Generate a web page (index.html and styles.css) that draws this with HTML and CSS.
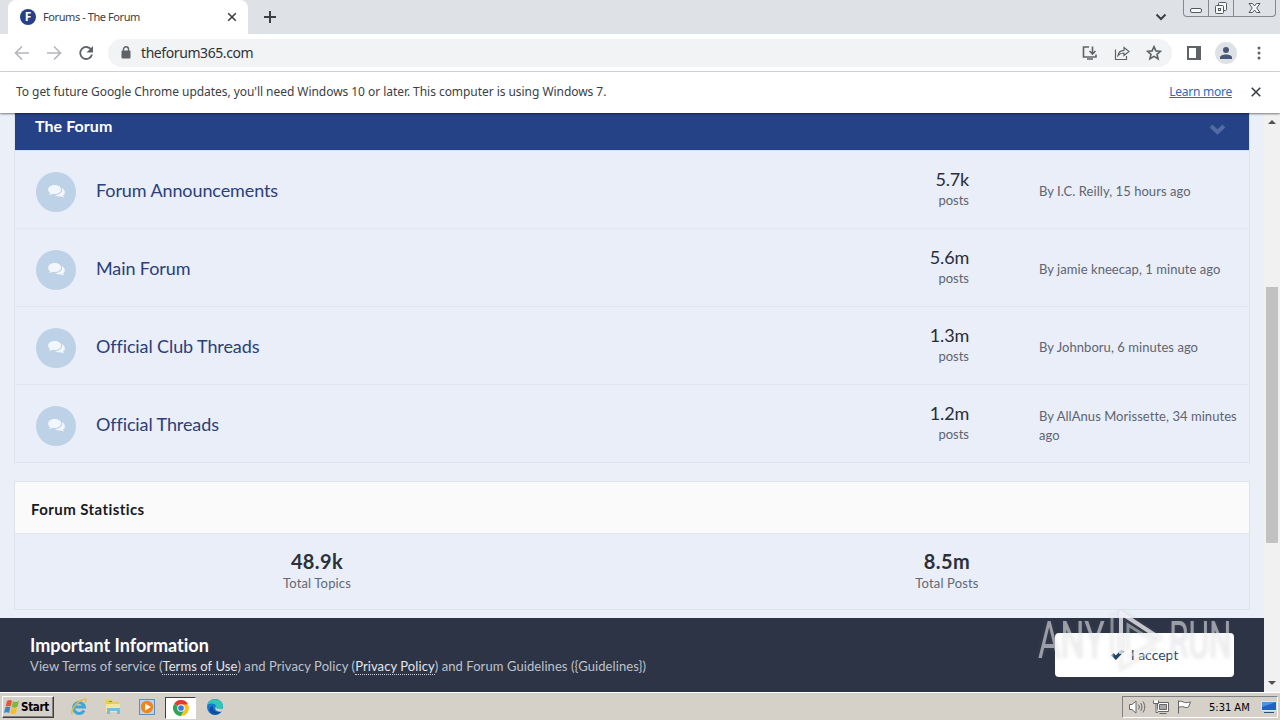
FILE: index.html
```html
<!DOCTYPE html>
<html lang="en">

<head>
    <meta charset="UTF-8">
    <title>Forums - The Forum</title>
    <link rel="stylesheet" href="styles.css">
</head>

<body>
    <svg class="defs" width="0" height="0">
        <symbol id="comments" viewBox="0 0 18 14">
            <path d="M7 0C3.200 0 0 2.200 0 5c0 1.500.9 2.800 2.300 3.700-.2.900-.8 1.500-1.300 2 1.500 0 2.800-.5 3.700-1.200.7.200 1.500.3 2.300.3 3.900 0 7-2.200 7-4.900S10.900 0 7 0z" />
            <path d="M14.900 3.300c.1.500.2 1 .2 1.500 0 3.500-3.700 6-8 6.100 1.200.9 2.700 1.400 4.500 1.400.7 0 1.300-.1 1.900-.2.900.7 2.200 1.200 3.700 1.200-.5-.5-1-1.100-1.200-1.900 1.200-.8 2-1.900 2-3.300 0-2-1.200-3.800-3.100-4.800z" />
        </symbol>
    </svg>

    <div class="tabstrip">
        <div class="tab">
            <span class="favicon">F</span>
            <span class="tab-title">Forums - The Forum</span>
            <svg class="tab-close" width="10" height="10" viewBox="0 0 10 10"><path d="M1.200 1.200l7.600 7.600M8.800 1.200L1.200 8.800" /></svg>
        </div>
        <svg class="new-tab" width="14" height="14" viewBox="0 0 14 14"><path d="M7 1v12M1 7h12" /></svg>
        <svg class="tab-search" width="12" height="8" viewBox="0 0 12 8"><path d="M1.500 1.500L6 6l4.500-4.500" /></svg>
        <div class="window-buttons">
            <span class="win-min"><svg width="13" height="16" viewBox="0 0 13 16"><rect x=".5" y="8.500" width="11" height="4" rx="1.500" /></svg></span>
            <span class="win-max"><svg width="14" height="16" viewBox="0 0 14 16"><rect x="4.500" y="2.500" width="8" height="8" rx="1" /><rect x="1.500" y="5.500" width="8" height="8" rx="1" /><rect x="4.500" y="8.500" width="2" height="2" /></svg></span>
            <span class="win-close"><svg width="13" height="16" viewBox="0 0 13 16"><path d="M1 3.500h3.500l2 2.500 2-2.500H12L8.700 8l3.300 4.500H8.500l-2-2.500-2 2.500H1L4.300 8z" /></svg></span>
        </div>
    </div>

    <div class="toolbar">
        <svg class="nav off" width="16" height="16" viewBox="0 0 16 16"><path d="M15 8H2M8 1.500L1.500 8 8 14.500" /></svg>
        <svg class="nav off" width="16" height="16" viewBox="0 0 16 16"><path d="M1 8h13M8 1.500L14.500 8 8 14.500" /></svg>
        <svg class="nav reload" width="16" height="16" viewBox="0 0 16 16"><path d="M13.300 4.800A6 6 0 1 0 14 9.500" /><path class="fill" d="M15 1v6.500H8.500z" /></svg>
        <div class="address">
            <svg class="lock" width="10" height="13" viewBox="0 0 10 13"><rect x=".5" y="4.500" width="9" height="8" rx="1" /><path d="M2.500 5V3.300a2.500 2.500 0 0 1 5 0V5" /></svg>
            <span class="url">theforum365.com</span>
            <svg class="tool" width="16" height="16" viewBox="0 0 16 16"><path d="M7 2H1.500v10H14V9.500M10.500 1.500v7M7.500 6l3 3 3-3M5 14h6" /></svg>
            <svg class="tool" width="16" height="16" viewBox="0 0 16 16"><path class="thin" d="M1.500 4.500v10h11V11M4 10.500c.5-3.500 2.500-5 6-5.200V2.500L15 6.500l-5 4V8C7.500 8 5.500 8.700 4 10.500z" /></svg>
            <svg class="tool" width="16" height="16" viewBox="0 0 16 16"><path d="M8 1.700l1.900 4.200 4.600.4-3.500 3 1.100 4.500L8 11.400l-4.100 2.400L5 9.300l-3.500-3 4.600-.4z" /></svg>
        </div>
        <svg class="panel" width="14" height="14" viewBox="0 0 14 14"><path d="M0 0h14v14H0zM2 2v10h7V2z" fill-rule="evenodd" /></svg>
        <span class="avatar"><svg width="14" height="14" viewBox="0 0 14 14"><circle cx="7" cy="4" r="3" /><path d="M1 13v-1.500C1 9.500 4 8.500 7 8.500s6 1 6 3V13z" /></svg></span>
        <svg class="dots" width="4" height="14" viewBox="0 0 4 14"><circle cx="2" cy="2" r="1.500" /><circle cx="2" cy="7" r="1.500" /><circle cx="2" cy="12" r="1.500" /></svg>
    </div>

    <div class="infobar">
        <span class="message">To get future Google Chrome updates, you'll need Windows 10 or later. This computer is using Windows 7.</span>
        <a class="learn" href="#">Learn more</a>
        <svg class="info-close" width="10" height="10" viewBox="0 0 10 10"><path d="M.7.7l8.600 8.600M9.300.7L.7 9.300" /></svg>
    </div>

    <div class="viewport">
        <div class="page">
            <main>
                <section class="forum-box">
                    <h2 class="forum-header">
                        <span>The Forum</span>
                        <svg width="17" height="11" viewBox="0 0 17 11"><path d="M2 2l6.500 6L15 2" /></svg>
                    </h2>
                    <div class="forum-row">
                        <span class="forum-icon"><svg width="17" height="13"><use href="#comments" /></svg></span>
                        <a class="forum-name">Forum Announcements</a>
                        <div class="count"><b>5.7k</b><span>posts</span></div>
                        <p class="latest">By I.C. Reilly, 15 hours ago</p>
                    </div>
                    <div class="forum-row">
                        <span class="forum-icon"><svg width="17" height="13"><use href="#comments" /></svg></span>
                        <a class="forum-name">Main Forum</a>
                        <div class="count"><b>5.6m</b><span>posts</span></div>
                        <p class="latest">By jamie kneecap, 1 minute ago</p>
                    </div>
                    <div class="forum-row">
                        <span class="forum-icon"><svg width="17" height="13"><use href="#comments" /></svg></span>
                        <a class="forum-name">Official Club Threads</a>
                        <div class="count"><b>1.3m</b><span>posts</span></div>
                        <p class="latest">By Johnboru, 6 minutes ago</p>
                    </div>
                    <div class="forum-row">
                        <span class="forum-icon"><svg width="17" height="13"><use href="#comments" /></svg></span>
                        <a class="forum-name">Official Threads</a>
                        <div class="count"><b>1.2m</b><span>posts</span></div>
                        <p class="latest">By AllAnus Morissette, 34 minutes ago</p>
                    </div>
                </section>

                <section class="stats-box">
                    <h3>Forum Statistics</h3>
                    <div class="stats">
                        <div class="stat"><b>48.9k</b><span>Total Topics</span></div>
                        <div class="stat"><b>8.5m</b><span>Total Posts</span></div>
                    </div>
                </section>
            </main>

            <div class="notice">
                <div class="notice-text">
                    <h4>Important Information</h4>
                    <p>View Terms of service (<a>Terms of Use</a>) and Privacy Policy (<a>Privacy Policy</a>) and Forum Guidelines ({Guidelines})</p>
                </div>
                <button class="accept">
                    <svg width="13" height="11" viewBox="0 0 12 10"><path d="M1.200 4.800l3.300 3.200L10.800 1.500" /></svg>
                    <span>I accept</span>
                </button>
            </div>
        </div>

        <div class="scrollbar">
            <svg width="8" height="4" viewBox="0 0 8 4"><path d="M0 4l4-4 4 4z" /></svg>
            <div class="track"><div class="thumb"></div></div>
            <svg width="8" height="4" viewBox="0 0 8 4"><path d="M0 0h8L4 4z" /></svg>
        </div>

        <div class="watermark">
            <span class="mark-any">ANY</span>
            <svg width="60" height="66" viewBox="0 0 60 66">
                <path class="soft" d="M15 8H8v42" />
                <path class="soft" d="M17 48v13l35-21" />
                <path class="strong" d="M17 46V5l40 26" />
                <path class="soft" d="M24 42V17l27 17-27 15" />
            </svg>
            <span class="mark-run">RUN</span>
        </div>
    </div>

    <div class="taskbar">
        <div class="start">
            <svg width="16" height="16" viewBox="0 0 16 16">
                <path fill="#e8562b" d="M3 2c2-1.500 3.500-1.200 5-.2L6.600 7.500C5 6.500 3.500 6.500 1.700 7.500z" />
                <path fill="#7cb83c" d="M9 2.200c2 1.200 3.700 1 6-.4l-1.500 5.900c-2 1.300-3.800 1.300-5.900.2z" />
                <path fill="#3c86c8" d="M1.400 8.300c1.800-1 3.300-1 4.900 0L5 14c-1.600-1-3.200-1-5 0z" />
                <path fill="#f4bf2d" d="M7.300 8.700c2 1.200 3.900 1 5.900-.2l-1.400 5.500c-2 1.400-3.900 1.300-5.900.1z" />
            </svg>
            <span>Start</span>
        </div>
        <div class="launch">
            <svg width="18" height="18" viewBox="0 0 18 18">
                <path d="M14 12.500A5.500 5.500 0 1 1 14.500 9H5" fill="none" stroke="#3da7dc" stroke-width="3" />
                <path d="M2.500 16C0 14 5 6 10 3s7-2 5.500 1.500" fill="none" stroke="#e4bd3d" stroke-width="1.500" />
            </svg>
            <svg width="18" height="18" viewBox="0 0 18 18">
                <path d="M2 2h6l1 2h6v10H2z" fill="#e9c85c" />
                <path d="M2 6h14v8H2z" fill="#f7e59b" />
                <path d="M3 10h13v6h-3v-3H6v3H3z" fill="#78bddc" />
                <path d="M5 3h3v1H5z" fill="#58a65c" />
            </svg>
            <svg width="18" height="18" viewBox="0 0 18 18">
                <rect x="1.500" y="1.500" width="15" height="15" fill="#b9d5ed" stroke="#5591c3" />
                <circle cx="9" cy="9" r="6.200" fill="#f08519" />
                <path d="M7 5.500l6 3.500-6 3.500z" fill="#fff" />
            </svg>
            <span class="active">
                <svg width="16" height="16" viewBox="0 0 18 18">
                    <path d="M9 9L1.200 4.500a9 9 0 0 1 15.600 0z" fill="#e33b2e" />
                    <path d="M9 9L1.200 4.500A9 9 0 0 0 9 18l4-7z" fill="#31a650" />
                    <path d="M9 5h7.900A9 9 0 0 1 9 18l4-7z" fill="#fbc116" />
                    <circle cx="9" cy="9" r="4.200" fill="#fff" />
                    <circle cx="9" cy="9" r="3.200" fill="#3b78e7" />
                </svg>
            </span>
            <svg width="18" height="18" viewBox="0 0 18 18">
                <circle cx="9" cy="9" r="8" fill="#1678d2" />
                <path d="M1.300 7C3 .5 12-1 15.800 4.500 18 8 16.500 11 13 11.500c-2 .2-3.500-.3-3-1.500C11 8 9 5.500 6 5.500 4 5.500 2 6 1.300 7z" fill="#35c6b1" />
                <path d="M7 8c-1 4 3 7 8 5.500-3 4.500-10 4-11.500-.5C2.800 11 4 8.500 7 8z" fill="#0c4fa0" />
                <path d="M9.500 8c-.5 2.500 3 3.800 6.800 2.500l1.500 1-3 2.200c-4 .3-6.500-2.200-5.300-5.700z" fill="#d5d0c8" />
            </svg>
        </div>
        <div class="tray">
            <svg width="18" height="16" viewBox="0 0 18 16"><path class="white" d="M1.500 5.500H4L8 2v12l-4-3.500H1.500z" /><path d="M10.500 5.500c1 1.500 1 3.500 0 5M12.700 4c1.700 2.500 1.700 5.500 0 8M15 2.500c2.300 3.500 2.300 7.500 0 11" /></svg>
            <svg width="18" height="16" viewBox="0 0 18 16"><path class="white" d="M5.500 3.500h11v9h-11z" /><path class="gray" d="M7.500 5.500h7v5h-7z" /><path class="white" d="M1.500 1.500v3h5v-3M4 4.500v9h2M7.500 14.500h7" /></svg>
            <svg width="18" height="16" viewBox="0 0 18 16"><path class="white" d="M2.500 1.500v13M2.500 2.500c3-1 4 .5 6 1 2 .4 3.500 0 6-.5l-2 5c-2 1-3 .5-4.500 0s-3.500-.5-5.500.5z" /></svg>
            <span class="clock">5:31 AM</span>
            <svg width="16" height="14" viewBox="0 0 16 14"><path d="M.5 1.500h15v9H.5z" fill="#2164bd" stroke="#dae4ef" /><path d="M1 2h14L1 7z" fill="#4d94df" stroke="none" /><path d="M3 12.500h10" stroke="#275085" /></svg>
        </div>
    </div>
</body>

</html>
```
FILE: styles.css
```css
* {
    box-sizing: border-box;
}

body {
    display: flex;
    flex-direction: column;
    width: 1280px;
    height: 720px;
    margin: 0;
    overflow: hidden;
    font-family: Lato, sans-serif;
    font-variant-ligatures: none;
    background: #fff;
}

svg {
    display: block;
    flex: none;
    fill: none;
}

h2, h3, h4, p {
    margin: 0;
}

.defs {
    position: absolute;
}

/* browser chrome */
.tabstrip {
    display: flex;
    height: 34px;
    flex: none;
    background: #dee1e6;
    font-family: "Noto Sans", sans-serif;
}

.tab {
    display: flex;
    align-items: center;
    width: 240px;
    margin-left: 8px;
    padding: 0 11px 0 12px;
    background: #fff;
    border-radius: 8px 8px 0 0;
}

.favicon {
    width: 16px;
    height: 16px;
    border-radius: 50%;
    background: #27408b;
    color: #fff;
    font: bold 12px/16px "Open Sans", sans-serif;
    text-align: center;
}

.tab-title {
    flex: 1;
    margin: -2px 0 0 7px;
    font-size: 11px;
    letter-spacing: -0.42px;
    color: #3c4043;
}

.tab-close,
.new-tab,
.tab-search,
.info-close {
    stroke: #3c4043;
    stroke-width: 1.6;
}

.new-tab {
    margin: 10px 0 0 15px;
    stroke-width: 2;
}

.tab-search {
    margin: 13px 16px 0 auto;
    stroke-width: 2;
}

.window-buttons {
    display: flex;
    width: 93px;
    height: 17px;
    margin-right: 4px;
    border: 1px solid #85888d;
    border-top: 0;
    border-radius: 0 0 4px 4px;
    stroke: #55585d;
}

.window-buttons svg {
    fill: #f7f7f7;
}

.window-buttons span {
    display: flex;
    justify-content: center;
    width: 25px;
    border-right: 1px solid #85888d;
}

.window-buttons .win-close {
    width: 41px;
    border: 0;
}

.toolbar {
    display: flex;
    align-items: center;
    height: 38px;
    flex: none;
    padding: 0 19px 0 14px;
    border-bottom: 1px solid #d5d7da;
}

.nav {
    margin-right: 16px;
    stroke: #5f6368;
    stroke-width: 1.8;
}

.nav.off {
    stroke: #b4b6b9;
    stroke-width: 1.6;
}

.nav.reload {
    margin-right: 14px;
}

.nav .fill {
    fill: #5f6368;
    stroke: none;
}

.address {
    display: flex;
    align-items: center;
    width: 1064px;
    height: 28px;
    padding: 0 10px 0 13px;
    border-radius: 14px;
    background: #f1f3f4;
}

.lock {
    fill: #5f6368;
}

.lock path {
    fill: none;
    stroke: #5f6368;
    stroke-width: 1.4;
}

.url {
    flex: 1;
    margin-left: 10px;
    font: 14px "Noto Sans", sans-serif;
    letter-spacing: -0.42px;
    color: #303236;
}

.tool {
    margin-left: 16px;
    stroke: #5f6368;
    stroke-width: 1.6;
}

.tool .thin {
    stroke-width: 1.2;
}

.panel {
    margin-left: 15px;
    fill: #5f6368;
}

.avatar {
    display: flex;
    align-items: center;
    justify-content: center;
    width: 22px;
    height: 22px;
    margin-left: 14px;
    border-radius: 50%;
    background: #dee1e6;
}

.avatar svg {
    fill: #485776;
}

.dots {
    margin-left: auto;
    fill: #5f6368;
}

.infobar {
    position: relative;
    z-index: 2;
    display: flex;
    align-items: center;
    height: 41px;
    flex: none;
    padding: 0 19px 2px 16px;
    background: #fff;
    box-shadow: 0 1px 2px rgba(0, 0, 0, 0.5);
    font: 12px "Noto Sans", sans-serif;
    letter-spacing: -0.05px;
    color: #3c4043;
}

.learn {
    margin: 0 19px 0 auto;
    letter-spacing: -0.25px;
    color: #2a6bc0;
}

/* forum page */
.viewport {
    position: relative;
    display: flex;
    height: 579px;
    flex: none;
}

.page {
    display: flex;
    flex-direction: column;
    width: 1264px;
    background: #ebeff8;
}

main {
    height: 505px;
    padding: 0 14px;
}

.forum-box,
.stats-box {
    width: 1236px;
    border: 1px solid #dfe3ec;
    background: #e9eef8;
}

.forum-box {
    border-top: 0;
}

.forum-header {
    display: flex;
    justify-content: space-between;
    height: 37px;
    padding: 3px 23px 0 20px;
    background: #264287;
    color: #fff;
    font-size: 16px;
    line-height: 20px;
    font-weight: 700;
    letter-spacing: 0.06px;
}

.forum-header svg {
    margin-top: 8px;
    stroke: #526aa5;
    stroke-width: 4;
}

.forum-row {
    display: flex;
    align-items: center;
    height: 78px;
    padding: 0 9px 0 21px;
    border-bottom: 1px solid #dfe4ed;
}

.forum-row:first-of-type {
    border-top: 1px solid #d4e0fb;
    height: 79px;
}

.forum-row:last-child {
    border-bottom: 0;
    height: 77px;
}

.forum-icon {
    display: flex;
    align-items: center;
    justify-content: center;
    width: 40px;
    height: 40px;
    margin-top: 4px;
    border-radius: 50%;
    background: #bdd1e7;
}

.forum-icon svg {
    fill: #f2f7fd;
}

.forum-name {
    flex: 1;
    margin-left: 20px;
    font-size: 18px;
    letter-spacing: -0.1px;
    color: #2b4078;
}

.count {
    display: flex;
    flex-direction: column;
    width: 80px;
    text-align: right;
    font-size: 13px;
    line-height: 19px;
    color: #606570;
}

.count b {
    margin-top: -1px;
    font-size: 18px;
    line-height: 23px;
    font-weight: 400;
    letter-spacing: -0.2px;
    color: #2a2e38;
}

.latest {
    width: 201px;
    margin-left: 70px;
    padding-top: 4px;
    font-size: 13px;
    line-height: 19px;
    letter-spacing: 0.05px;
    color: #5f6470;
}

.stats-box {
    height: 129px;
    margin-top: 18px;
}

.stats-box h3 {
    height: 52px;
    padding-left: 16px;
    border-bottom: 1px solid #e1e4ea;
    background: #fafafa;
    font-size: 15px;
    line-height: 55px;
    letter-spacing: 0.42px;
    color: #171a22;
}

.stats {
    display: flex;
    padding: 15px 2px 0;
}

.stat {
    display: flex;
    flex-direction: column;
    width: 600px;
    text-align: center;
    font-size: 13px;
    line-height: 19px;
    letter-spacing: 0.15px;
    color: #636874;
}

.stat + .stat {
    margin-left: 30px;
}

.stat b {
    margin-bottom: 1px;
    font-size: 20px;
    line-height: 24px;
    letter-spacing: 0.4px;
    color: #2c3039;
}

.notice {
    display: flex;
    align-items: flex-start;
    justify-content: space-between;
    height: 74px;
    padding: 15px 30px;
    background: #2d3446;
    color: #bec2cc;
}

.notice h4 {
    font-size: 18px;
    line-height: 24px;
    color: #fff;
}

.notice p {
    font-size: 13px;
    line-height: 18px;
    letter-spacing: 0.08px;
}

.notice a {
    display: inline-block;
    line-height: 16px;
    border-bottom: 1px dotted #cfd3dc;
    color: #e4e7ed;
}

.accept {
    display: flex;
    align-items: center;
    justify-content: center;
    gap: 7px;
    width: 179px;
    height: 44px;
    padding: 0 0 2px;
    border: 0;
    border-radius: 4px;
    background: #fff;
    color: #294a6b;
    font: 14px Lato, sans-serif;
}

.accept svg {
    stroke: #1e4668;
    stroke-width: 3;
}

.scrollbar {
    display: flex;
    flex-direction: column;
    align-items: center;
    width: 16px;
    padding: 7px 0;
    background: #f1f1f1;
}

.scrollbar svg {
    fill: #505050;
}

.track {
    flex: 1;
    padding-top: 163px;
}

.thumb {
    width: 12px;
    height: 256px;
    background: #c1c1c1;
}

/* recording watermark, sits over the page */
.watermark {
    position: absolute;
    left: 1038px;
    top: 495px;
    display: flex;
    align-items: center;
    width: 196px;
    height: 66px;
    font: 51px Roboto, sans-serif;
    color: rgba(240, 241, 244, 0.55);
    filter: drop-shadow(0 0 2px rgba(120, 120, 120, 0.35));
    pointer-events: none;
}

.watermark span {
    line-height: 68px;
    transform-origin: 0 50%;
}

.mark-any {
    width: 66px;
    transform: scaleX(0.67);
}

.mark-run {
    width: 62px;
    margin-left: 5px;
    transform: scaleX(0.62);
}

.watermark .soft {
    stroke: rgba(240, 241, 244, 0.45);
    stroke-width: 3;
}

.watermark .strong {
    stroke: rgba(245, 246, 248, 0.75);
    stroke-width: 4;
    stroke-linejoin: round;
}

/* taskbar */
.taskbar {
    display: flex;
    align-items: center;
    height: 28px;
    flex: none;
    padding: 1px 2px 0;
    background: #d5d0c8;
    border-top: 1px solid #fff;
    font-family: "DejaVu Sans Condensed", "DejaVu Sans", sans-serif;
    color: #000;
}

.start {
    display: flex;
    align-items: center;
    gap: 1px;
    width: 52px;
    height: 22px;
    padding-left: 1px;
    border: 1px solid;
    border-color: #fff #404040 #404040 #fff;
    box-shadow: inset -1px -1px #808080;
    font-weight: bold;
    font-size: 11.5px;
    letter-spacing: -0.3px;
}

.launch {
    display: flex;
    align-items: center;
    gap: 16px;
    margin-left: 16px;
}

.launch .active {
    display: flex;
    align-items: center;
    justify-content: center;
    width: 31px;
    height: 22px;
    margin: 0 -6px -1px -7px;
    background: #fff;
    border: 1px solid;
    border-color: #404040 #fff #fff #404040;
}

.tray {
    display: flex;
    align-items: center;
    gap: 6px;
    width: 156px;
    height: 22px;
    margin-left: auto;
    padding-left: 5px;
    border: 1px solid;
    border-color: #808080 #fff #fff #808080;
}

.tray svg {
    stroke: #666;
}

.tray .white {
    fill: #fff;
}

.tray .gray {
    fill: #aaa;
}

.clock {
    width: 42px;
    margin: 0 4px 0 9px;
    font-size: 11px;
    white-space: nowrap;
}
```
